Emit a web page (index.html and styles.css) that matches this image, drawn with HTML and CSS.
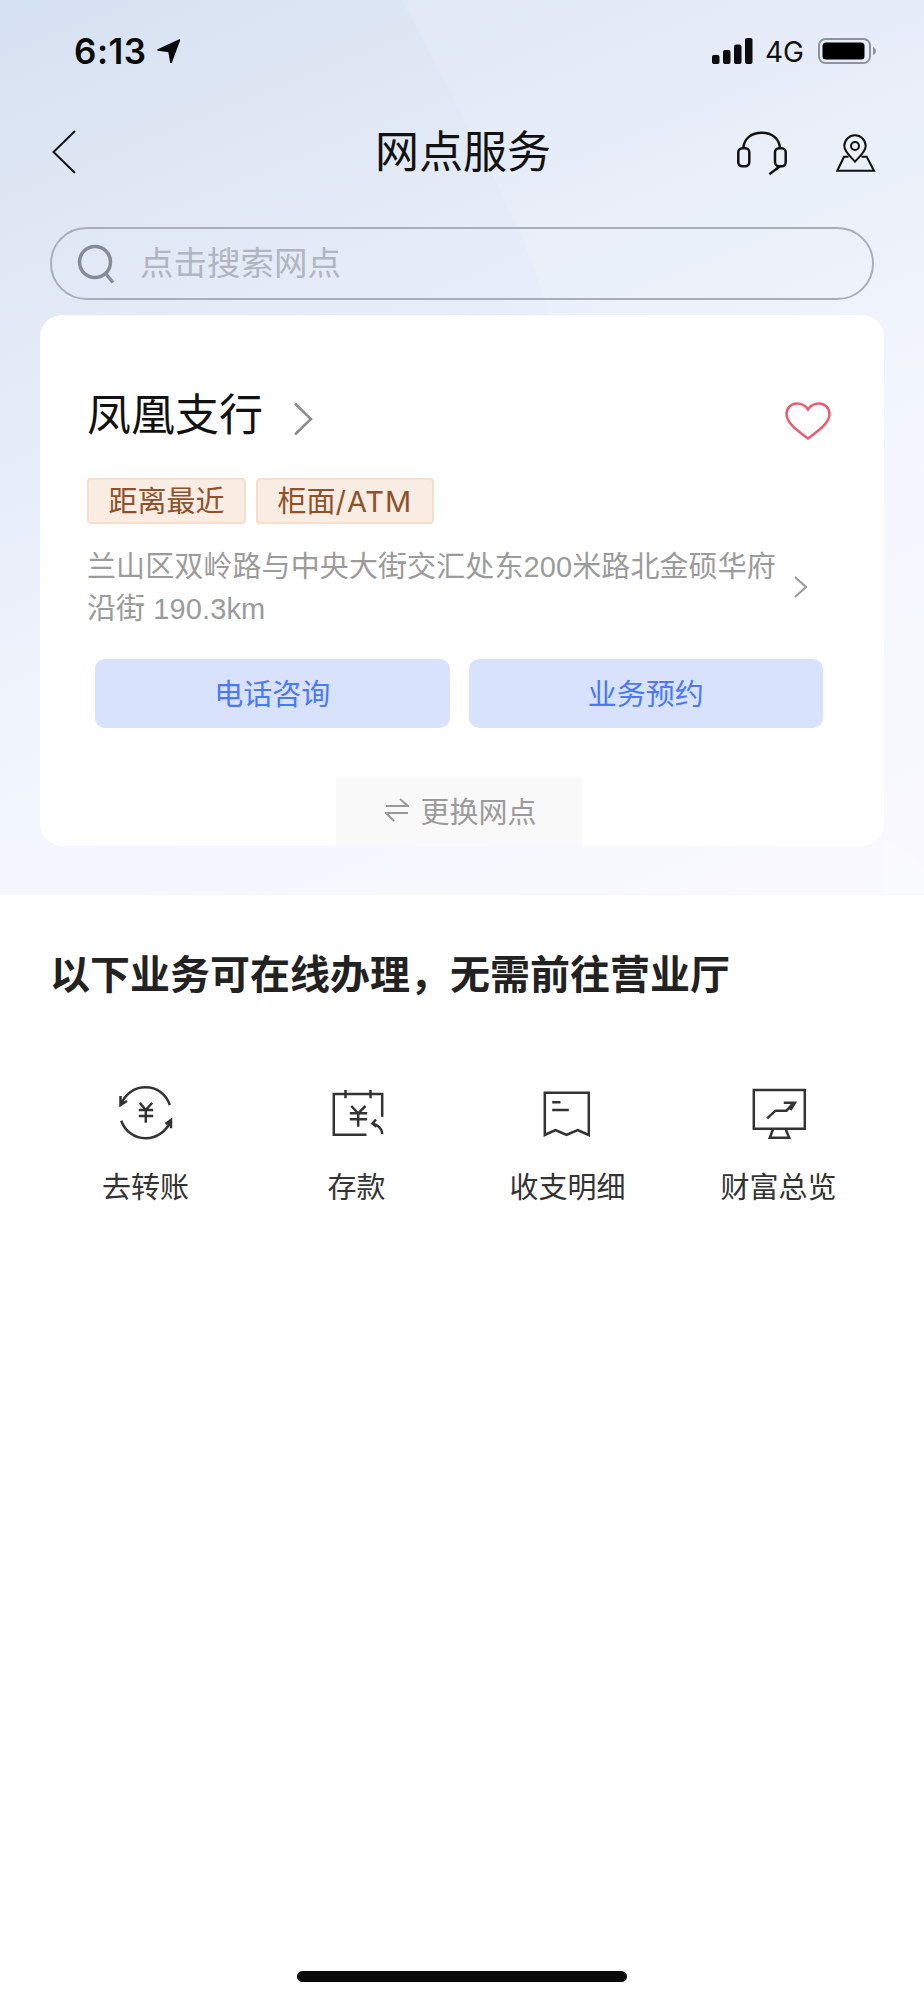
FILE: index.html
```html
<!DOCTYPE html>
<html lang="zh-CN">
<head>
<meta charset="utf-8">
<title>网点服务</title>
<link rel="stylesheet" href="styles.css">
</head>
<body>
<div class="page">
  <header class="hero">
    <svg class="hero-shape" viewBox="0 0 924 895" aria-hidden="true">
      <path class="shape-a" d="M402 0C470 130 535 245 552 330L590 836L541 895H924V0Z"/>
      <path class="shape-b" d="M884 836L924 866V895H884Z"/>
    </svg>
    <div class="status">
      <div class="status-left">
        <span class="time">6:13</span>
        <svg class="loc" viewBox="0 0 24 24"><path d="M1 11L22.500 1L14 24L12 12.500Z"/></svg>
      </div>
      <div class="status-right">
        <svg class="signal" viewBox="0 0 41 26"><rect x="0" y="17" width="7.5" height="9" rx="2"/><rect x="11" y="12" width="7.5" height="14" rx="2"/><rect x="22" y="6.500" width="7.500" height="19.500" rx="2"/><rect x="33" y="0" width="7.500" height="26" rx="2"/></svg>
        <span class="net">4G</span>
        <svg class="battery" viewBox="0 0 58 26"><rect class="bat-frame" x="1" y="1" width="51" height="24" rx="6.500"/><rect x="4.500" y="4.500" width="42" height="17" rx="3.500"/><path class="bat-nub" d="M55 9C57 10 58 11.500 58 13S57 16 55 17Z"/></svg>
      </div>
    </div>
    <nav class="nav">
      <svg class="back" viewBox="0 0 24 44"><path d="M23 1L1.500 22L23 43"/></svg>
      <h1 class="nav-title">网点服务</h1>
      <div class="nav-actions">
        <svg class="headset" viewBox="0 0 52 46"><path d="M7.300 18.300C8 8 16 2.700 25.700 2.700S43.300 8 44 18.300"/><rect x="2.300" y="18.300" width="11" height="18" rx="4"/><rect x="39" y="18.300" width="10.700" height="18" rx="4"/><path d="M44 36.300L33.300 44.300"/></svg>
        <svg class="pin" viewBox="0 0 40 40"><path d="M19 28.700C14 23 8.300 18.500 8.300 13A10.700 10.700 0 0 1 29.700 13C29.700 18.500 24 23 19 28.700Z"/><circle cx="19" cy="13" r="4"/><path d="M12.500 23.700H8L1.300 37.700H38L30.700 23.700H25.500"/></svg>
      </div>
    </nav>
    <div class="search">
      <svg class="search-icon" viewBox="0 0 38 40"><circle cx="18" cy="18" r="15.500"/><path d="M28.500 29.500L36 38.500"/></svg>
      <span class="search-text">点击搜索网点</span>
    </div>
    <section class="card">
      <div class="card-head">
        <div class="branch">
          <span class="branch-name">凤凰支行</span>
          <svg class="chev-lg" viewBox="0 0 20 34"><path d="M2 1.500L18 17L2 32.500"/></svg>
        </div>
        <svg class="heart" viewBox="0 0 46 38"><path d="M23 36.500C14 29.500 1.500 21.500 1.500 12C1.500 5.500 6.500 1.500 12 1.500C16.500 1.500 20.500 3.500 23 7.500C25.500 3.500 29.500 1.500 34 1.500C39.500 1.500 44.500 5.500 44.500 12C44.500 21.500 32 29.500 23 36.500Z"/></svg>
      </div>
      <div class="tags">
        <span class="tag">距离最近</span>
        <span class="tag">柜面<span class="tag-latin">/ATM</span></span>
      </div>
      <div class="address">
        <p class="address-text">兰山区双岭路与中央大街交汇处东200米路北金硕华府<br>沿街 190.3km</p>
        <svg class="chev-sm" viewBox="0 0 13 22"><path d="M1 1L12 11L1 21"/></svg>
      </div>
      <div class="actions">
        <button class="action">电话咨询</button>
        <button class="action">业务预约</button>
      </div>
      <div class="switch">
        <svg class="swap" viewBox="0 0 24 24"><path d="M1 8H23L15 1M23 15H1L9 23"/></svg>
        <span>更换网点</span>
      </div>
    </section>
  </header>

  <main class="services">
    <h2 class="services-title">以下业务可在线办理&#xFF0C;无需前往营业厅</h2>
    <div class="grid">
      <div class="item">
        <svg class="item-icon" viewBox="0 0 56 56"><path d="M3 20.500C7 10 16 3.300 27.500 3.300C39 3.300 48 10 51.800 21M2.500 12L2.500 21L9 17M3.200 36.700C7 47 16 54.300 27.500 54.300C39 54.300 49 47 53 36M53 44.300L53 36L47.500 40M21.800 18.700L27.800 26L34.200 18.700M20.800 26H35.200M20.800 32H35.200M27.800 26V38.700"/></svg>
        <span class="item-label">去转账</span>
      </div>
      <div class="item">
        <svg class="item-icon" viewBox="0 0 56 56"><path d="M53.200 32.700V10H4.800V50.700H37.500M16.500 6V14.300M41.500 6V14.300M22.200 22L29.200 29.300L36.500 22M20.800 29.300H38.200M20.800 35.300H38.200M29.200 29.300V42.700M53.200 50C53.200 45 49 41 43.500 39.500M47 35.500L43.500 39.500L47.500 42.700"/></svg>
        <span class="item-label">存款</span>
      </div>
      <div class="item">
        <svg class="item-icon" viewBox="0 0 56 56"><path d="M4.800 51V8.700H48.800V51L43 48.500L37.800 46L32 48.500L26.500 51L21 48.500L15.500 46L10 48.500ZM12.200 18.300H20.500M12.200 26H28.800"/></svg>
        <span class="item-label">收支明细</span>
      </div>
      <div class="item">
        <svg class="item-icon" viewBox="0 0 56 56"><path d="M2.800 6H53.800V44.700H2.800ZM22.200 44.700L18.800 53.700H38.200L34.500 44.700M16.200 34.300L24.500 26.700H35.500L42.800 18.700M32.800 18.700H43.800L39.500 26"/></svg>
        <span class="item-label">财富总览</span>
      </div>
    </div>
  </main>
  <div class="home-indicator"></div>
</div>
</body>
</html>
```

FILE: styles.css
```css
* { box-sizing: border-box; }
html, body { margin: 0; padding: 0; background: #fff; }
body { font-family: "Liberation Sans", "Noto Sans CJK SC", sans-serif; color: #222; }
.page { width: 924px; height: 2000px; display: flex; flex-direction: column; overflow: hidden; }

.hero {
  position: relative;
  height: 895px;
  padding-top: 31px;
  background: linear-gradient(158deg, #d6e1f1 0%, #dfe7f4 18%, #e8eef9 40%, #f2f6fd 65%, #f8f9fe 100%);
}
.hero-shape { position: absolute; inset: 0; width: 924px; height: 895px; }
.shape-a { fill: #fff; opacity: .12; }
.shape-b { fill: #fff; opacity: .2; }
.status, .nav, .search, .card { position: relative; }

.status { height: 40px; padding: 0 48px 0 74px; display: flex; justify-content: space-between; align-items: center; }
.status-left { display: flex; align-items: center; gap: 10px; }
.time { font-family: Inter, "Liberation Sans", sans-serif; font-size: 35px; font-weight: 600; line-height: 40px; color: #0a0a0a; letter-spacing: .5px; }
.loc { width: 24px; height: 24px; fill: #0a0a0a; stroke: #0a0a0a; stroke-width: 1.500; stroke-linejoin: round; }
.status-right { display: flex; align-items: center; }
.signal { width: 41px; height: 26px; fill: #0a0a0a; }
.net { margin-left: 12px; margin-top: 2px; font-family: Inter, "Liberation Sans", sans-serif; font-size: 28px; line-height: 32px; color: #111; width: 39px; }
.battery { margin-left: 14px; width: 58px; height: 26px; fill: #000; }
.bat-frame { fill: none; stroke: #8e939b; stroke-width: 2; }
.bat-nub { fill: #8e939b; }

.nav { margin-top: 37px; height: 88px; padding: 0 48px 0 52px; display: grid; grid-template-columns: 1fr auto 1fr; align-items: center; }
.back { width: 24px; height: 44px; fill: none; stroke: #111; stroke-width: 2; }
.nav-title { margin: 2px 0 0 -2px; font-size: 44px; font-weight: 400; line-height: 60px; color: #111; }
.nav-actions { display: flex; justify-content: flex-end; align-items: center; gap: 48px; margin-top: 1px; }
.headset { width: 52px; height: 46px; fill: none; stroke: #111; stroke-width: 2.500; }
.pin { width: 40px; height: 40px; fill: none; stroke: #111; stroke-width: 2; }

.search {
  margin: 31px 50px 0;
  height: 73px;
  border: 2px solid #a9aebb;
  border-radius: 37px;
  padding-left: 25px;
  display: flex;
  align-items: center;
  gap: 25px;
}
.search-icon { width: 38px; height: 40px; fill: none; stroke: #868c96; stroke-width: 3.500; }
.search-text { font-size: 33.500px; line-height: 44px; color: #b0b5c0; }

.card {
  margin: 15px 40px 0;
  height: 531px;
  padding: 70px 53px 0 47px;
  background: #fff;
  border-radius: 22px;
  display: flex;
  flex-direction: column;
}
.card-head { height: 60px; display: flex; justify-content: space-between; align-items: center; }
.branch { display: flex; align-items: center; gap: 30px; }
.branch-name { font-size: 44px; line-height: 60px; color: #111; padding-top: 2px; }
.chev-lg { width: 20px; height: 34px; fill: none; stroke: #8c8c8c; stroke-width: 2.500; margin-top: 8px; }
.heart { width: 46px; height: 38px; fill: none; stroke: #ef5a6e; stroke-width: 2.500; margin-top: 12px; }

.tags { margin-top: 33px; display: flex; gap: 10px; }
.tag {
  height: 46px;
  padding: 2px 19.500px 0;
  border: 2px solid #f7dfcf;
  border-radius: 4px;
  background: #f8ece3;
  color: #8f5129;
  font-family: Inter, "Noto Sans CJK SC", sans-serif;
  font-size: 29px;
  line-height: 40px;
  white-space: nowrap;
}
.tag-latin { letter-spacing: .9px; }

.address { margin-top: 22px; display: flex; align-items: center; gap: 18px; }
.address-text { margin: 0; width: 689px; font-size: 29px; line-height: 42px; color: #9b9b9b; white-space: nowrap; letter-spacing: .1px; }
.chev-sm { width: 13px; height: 22px; fill: none; stroke: #999; stroke-width: 2; margin-top: -2px; }

.actions { margin: 29px 8px 0; display: grid; grid-template-columns: 1fr 1fr; gap: 19px; }
.action {
  height: 69px;
  padding: 0 0 4px;
  border: 0;
  border-radius: 10px;
  background: #d8e2fd;
  color: #4a78f6;
  font: inherit;
  font-size: 29px;
}

.switch {
  margin-top: 49px;
  align-self: center;
  width: 246px;
  height: 69px;
  padding: 0 0 3px 4px;
  background: #f9f9f9;
  color: #9b9b9b;
  font-size: 29px;
  display: flex;
  align-items: center;
  justify-content: center;
  gap: 11px;
}
.swap { width: 24px; height: 24px; fill: none; stroke: #999; stroke-width: 2; }

.services { padding: 49px 51px 0 0; }
.services-title { margin: 0 0 0 50px; font-size: 40px; font-weight: 700; line-height: 56px; color: #222; white-space: nowrap; font-family: "Noto Sans CJK SC", sans-serif; }
.grid { margin: 84px 0 0 40px; width: 844px; display: grid; grid-template-columns: repeat(4, 1fr); }
.item { display: flex; flex-direction: column; align-items: center; gap: 28px; }
.item-icon { width: 56px; height: 56px; fill: none; stroke: #333; stroke-width: 2.500; }
.item-label { font-size: 29px; line-height: 40px; color: #333; }

.home-indicator { margin: auto auto 18px; width: 330px; height: 11px; border-radius: 6px; background: #0a0a0a; }
```
